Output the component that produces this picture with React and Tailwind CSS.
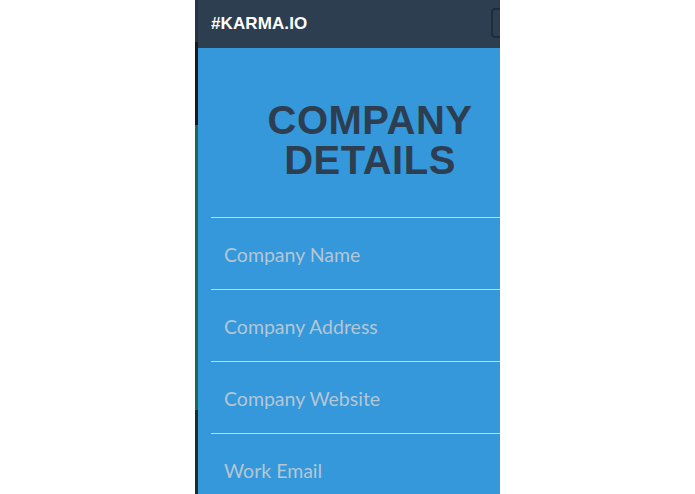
import React from 'react';

const fields = ['Company Name', 'Company Address', 'Company Website', 'Work Email'];

const App = () => {
  return (
    <div className="w-[695px] h-[494px] bg-white flex overflow-hidden">
      <div className="w-[195px] shrink-0" />
      {/* slice of the page behind the panel */}
      <div className="w-[3px] shrink-0 flex flex-col">
        <div className="h-[42px] bg-[#263445]" />
        <div className="h-[83px] bg-[#161a1d]" />
        <div className="h-[285px] bg-[#17695c]" />
        <div className="flex-1 bg-[#14302c]" />
      </div>
      <div className="w-[302px] shrink-0 overflow-hidden">
        <div className="w-[344px] h-[494px] bg-[#3498db] flex flex-col">
          <nav className="h-[48px] shrink-0 bg-[#2c3e50] flex items-center justify-between pl-[13px] pr-[7px]">
            <span className="text-white font-bold text-[17px] tracking-[0.1px] font-['Liberation_Sans',Arial,sans-serif]">
              #KARMA.IO
            </span>
            <button className="w-[44px] h-[30px] mt-[-3px] rounded-[4px] border-2 border-[#1f2c3a]" />
          </nav>
          <h1 className="mt-[52px] text-center text-[40px] leading-[40px] font-bold tracking-[0.5px] text-[#2c3e50] font-['Liberation_Sans',Arial,sans-serif]">
            COMPANY
            <br />
            DETAILS
          </h1>
          <div className="mt-[37px] ml-[13px]">
            {fields.map((f) => (
              <div key={f} className="border-t border-[#b4dcf6] h-[72px]">
                <input
                  type="text"
                  placeholder={f}
                  className="w-full bg-transparent outline-none pl-[13px] pt-[25px] text-[19.5px] leading-[1.2] text-white placeholder:text-[#b5c6d4] font-['Lato','Liberation_Sans',sans-serif]"
                />
              </div>
            ))}
          </div>
        </div>
      </div>
    </div>
  );
};

export default App;
